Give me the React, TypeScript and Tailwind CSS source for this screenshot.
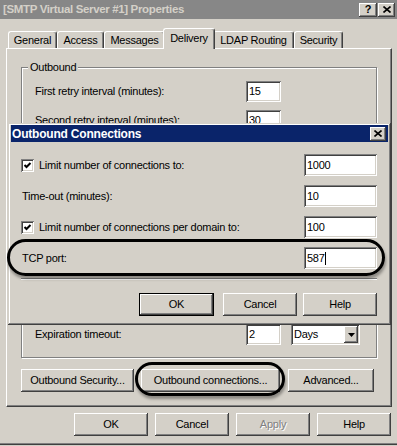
import React from 'react';

const raised =
  'shadow-[inset_-1px_-1px_0_#404040,inset_1px_1px_0_#ffffff,inset_-2px_-2px_0_#808080,inset_2px_2px_0_#d4d0c8]';
const sunken =
  'shadow-[inset_1px_1px_0_#808080,inset_-1px_-1px_0_#ffffff,inset_2px_2px_0_#404040,inset_-2px_-2px_0_#d4d0c8]';

type BtnProps = { label: string; w: string; def?: boolean; disabled?: boolean };

const Button: React.FC<BtnProps> = ({ label, w, def, disabled }) => (
  <div
    className={`${w} h-[23px] bg-[#d4d0c8] flex items-center justify-center ${
      def ? 'border border-black' : ''
    }`}
  >
    <div className={`w-full h-full flex items-center justify-center ${raised}`}>
      <span
        className={
          disabled ? 'text-[#808080] [text-shadow:1px_1px_0_#ffffff]' : 'text-black'
        }
      >
        {label}
      </span>
    </div>
  </div>
);

const Field: React.FC<{ value: string; w: string; h?: string; caret?: boolean }> = ({
  value,
  w,
  h = 'h-[21px]',
  caret,
}) => (
  <div className={`${w} ${h} bg-white ${sunken} flex items-center pl-[3px]`}>
    <span>{value}</span>
    {caret && <span className="w-px h-[13px] bg-black" />}
  </div>
);

const Check: React.FC = () => (
  <div className={`w-[13px] h-[13px] bg-white ${sunken} flex items-center justify-center`}>
    <svg width="9" height="9" viewBox="0 0 9 9">
      <path d="M1.5 4 L3.5 6 L7.5 2" stroke="black" strokeWidth="2" fill="none" />
    </svg>
  </div>
);

const Tab: React.FC<{ label: string; w: string; active?: boolean }> = ({ label, w, active }) => (
  <div
    className={`${w} ${
      active ? 'h-[21px] -mb-px -mx-[2px] relative z-10 pb-[2px]' : 'h-[17px]'
    } bg-[#d4d0c8] border-l border-t border-white border-r border-r-[#404040] rounded-t-[3px] shadow-[inset_-1px_0_0_#808080] flex items-center justify-center`}
  >
    {label}
  </div>
);

const Row: React.FC<{ label: string; value: string; mt?: string }> = ({ label, value, mt = '' }) => (
  <div className={`flex items-center h-[21px] ${mt}`}>
    <span className="w-[211px]">{label}</span>
    <Field value={value} w="w-[35px]" />
  </div>
);

export default function App() {
  return (
    <div className="w-[397px] h-[446px] bg-[#d4d0c8] relative overflow-hidden text-[11px] tracking-[-0.25px] leading-none text-black font-['Liberation_Sans',Arial,sans-serif]">
      {/* title bar */}
      <div className="h-[19px] bg-[#878787] flex items-center pl-[3px] pr-[2px]">
        <span className="font-bold text-[11.5px] text-[#d4d0c8] tracking-[-0.35px]">
          [SMTP Virtual Server #1] Properties
        </span>
        <div className="ml-auto flex gap-[1px]">
          <div className={`w-[18px] h-[14px] bg-[#d4d0c8] ${raised} flex items-center justify-center font-bold text-[11px]`}>
            ?
          </div>
          <div className={`w-[17px] h-[14px] bg-[#d4d0c8] ${raised} flex items-center justify-center`}>
            <svg width="8" height="7" viewBox="0 0 8 7">
              <path d="M0.5 0.5 L7.5 6.5 M7.5 0.5 L0.5 6.5" stroke="black" strokeWidth="1.6" />
            </svg>
          </div>
        </div>
      </div>

      {/* tabs */}
      <div className="mt-[9px] pl-[8px] flex items-end">
        <Tab label="General" w="w-[49px]" />
        <Tab label="Access" w="w-[47px]" />
        <Tab label="Messages" w="w-[61px]" />
        <Tab label="Delivery" w="w-[52px]" active />
        <Tab label="LDAP Routing" w="w-[81px]" />
        <Tab label="Security" w="w-[49px]" />
      </div>

      {/* tab panel */}
      <div className="ml-[6px] w-[386px] h-[359px] border border-t-white border-l-white border-r-[#404040] border-b-[#404040] shadow-[inset_-1px_-1px_0_#808080] pl-[14px] pt-[11px]">
        <fieldset className="w-[356px] border border-[#808080] shadow-[inset_1px_1px_0_#ffffff,1px_1px_0_#ffffff]">
          <legend className="ml-[6px] px-[2px] bg-[#d4d0c8] leading-[14px]">Outbound</legend>
          <div className="pl-[13px] pt-[7px] pb-[12px]">
            <Row label="First retry interval (minutes):" value="15" />
            <Row label="Second retry interval (minutes):" value="30" mt="mt-[8px]" />
            {/* rows hidden behind the dialog */}
            <div className="h-[193px]" />
            <div className="flex items-center h-[21px]">
              <span className="w-[211px]">Expiration timeout:</span>
              <Field value="2" w="w-[35px]" />
              <div className={`ml-[10px] w-[69px] h-[21px] bg-white ${sunken} flex items-center pl-[3px] pr-[2px]`}>
                <span>Days</span>
                <div className={`ml-auto w-[14px] h-[17px] bg-[#d4d0c8] ${raised} flex items-center justify-center`}>
                  <svg width="7" height="4" viewBox="0 0 7 4">
                    <path d="M0 0 H7 L3.5 4 Z" fill="black" />
                  </svg>
                </div>
              </div>
            </div>
          </div>
        </fieldset>

        <div className="mt-[11px] flex">
          <Button label="Outbound Security..." w="w-[113px]" />
          <div className="ml-[7px]">
            <Button label="Outbound connections..." w="w-[139px]" />
          </div>
          <div className="ml-[8px]">
            <Button label="Advanced..." w="w-[86px]" />
          </div>
        </div>
      </div>

      {/* bottom buttons */}
      <div className="mt-[6px] pr-[6px] flex justify-end gap-[7px]">
        <Button label="OK" w="w-[74px]" />
        <Button label="Cancel" w="w-[74px]" />
        <Button label="Apply" w="w-[74px]" disabled />
        <Button label="Help" w="w-[74px]" />
      </div>
      <div className="mt-[7px] h-px bg-[#808080]" />
      <div className="h-px bg-[#404040]" />

      {/* Outbound Connections dialog */}
      <div className="absolute left-[8px] top-[123px] w-[383px] h-[202px] bg-[#d4d0c8] shadow-[inset_-1px_-1px_0_#404040,inset_1px_1px_0_#d4d0c8,inset_-2px_-2px_0_#808080,inset_2px_2px_0_#ffffff] pt-[2px] px-[3px]">
        <div className="h-[17px] bg-[#0a246a] flex items-center pl-[1px] pr-[2px]">
          <span className="font-bold text-[12px] text-white tracking-[-0.2px]">Outbound Connections</span>
          <div className={`ml-auto w-[16px] h-[14px] bg-[#d4d0c8] ${raised} flex items-center justify-center`}>
            <svg width="8" height="7" viewBox="0 0 8 7">
              <path d="M0.5 0.5 L7.5 6.5 M7.5 0.5 L0.5 6.5" stroke="black" strokeWidth="1.6" />
            </svg>
          </div>
        </div>

        <div className="pt-[12px] pl-[10px] pr-[11px]">
          <div className="flex items-center justify-between h-[22px]">
            <div className="flex items-center">
              <Check />
              <span className="ml-[5px]">Limit number of connections to:</span>
            </div>
            <Field value="1000" w="w-[73px]" h="h-[22px]" />
          </div>
          <div className="flex items-center justify-between h-[22px] mt-[9px]">
            <span className="pl-[1px]">Time-out (minutes):</span>
            <Field value="10" w="w-[73px]" h="h-[22px]" />
          </div>
          <div className="flex items-center justify-between h-[22px] mt-[9px]">
            <div className="flex items-center">
              <Check />
              <span className="ml-[5px]">Limit number of connections per domain to:</span>
            </div>
            <Field value="100" w="w-[73px]" h="h-[22px]" />
          </div>
          <div className="flex items-center justify-between h-[22px] mt-[9px]">
            <span className="pl-[1px]">TCP port:</span>
            <Field value="587" w="w-[73px]" h="h-[22px]" caret />
          </div>

          <div className="mt-[9px] h-px bg-[#808080] border-b border-white box-content" />

          <div className="mt-[13px] flex justify-end">
            <Button label="OK" w="w-[75px]" def />
            <div className="ml-[9px]">
              <Button label="Cancel" w="w-[74px]" />
            </div>
            <div className="ml-[6px]">
              <Button label="Help" w="w-[74px]" />
            </div>
          </div>
        </div>
      </div>

      {/* hand-drawn highlight ovals */}
      <div className="absolute left-[7px] top-[239px] w-[378px] h-[37px] rounded-full border-[3px] border-black shadow-[1px_3px_3px_rgba(0,0,0,0.35)] pointer-events-none" />
      <div className="absolute left-[135px] top-[362px] w-[150px] h-[34px] rounded-full border-[3px] border-black shadow-[1px_3px_3px_rgba(0,0,0,0.35)] pointer-events-none" />
    </div>
  );
}
